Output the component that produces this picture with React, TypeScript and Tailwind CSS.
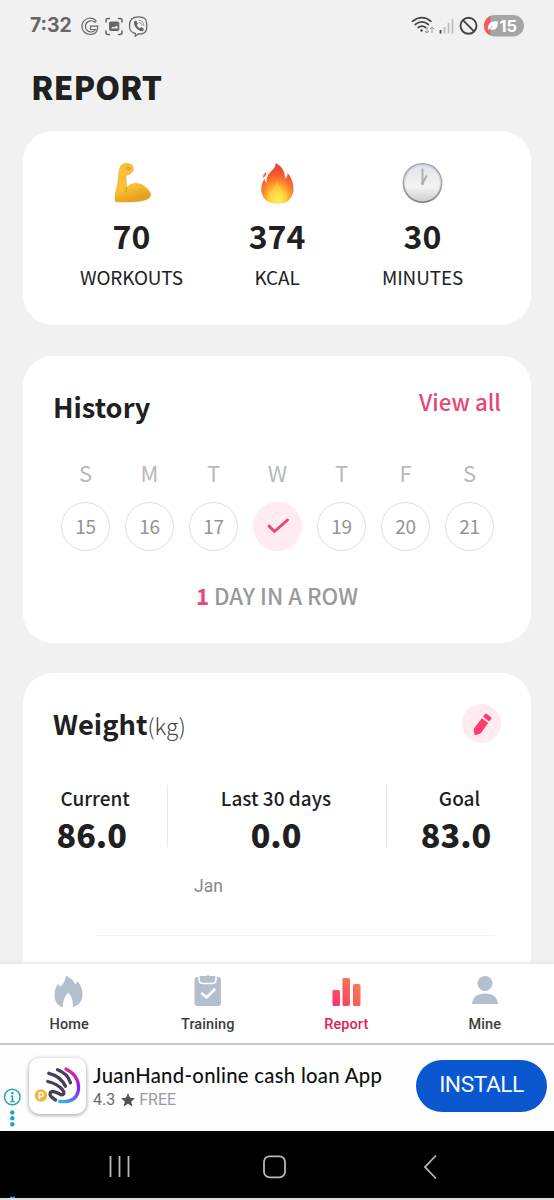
import type { ReactNode } from 'react';

function StatusBar() {
  return (
    <header className="flex h-[52px] shrink-0 items-center pl-[30px] pr-[30px] text-[#666]">
      <span className="w-[51px] font-[Inter,sans-serif] text-[19.400px] font-bold leading-none">7:32</span>
      <svg width="68" height="22" viewBox="81 15 68 22" fill="none" stroke="#666" className="shrink-0">
        <path d="M96.300 20.800l-1.500 1.500a5.600 5.600 0 1 0 .8 7.200H90.500v-3.300h7.200q.3 8-7.200 8.300a8.200 8.200 0 1 1 5.800-13.700" strokeWidth="1.200" />
        <path d="M106 22v-1.500q0-2 2-2h1.500M118.500 18.500h1.500q2 0 2 2V22M122 31v1.500q0 2-2 2h-1.500M109.500 34.500H108q-2 0-2-2V31" strokeWidth="1.500" strokeLinecap="round" />
        <rect x="109.500" y="22" width="9.300" height="8.500" rx="1" fill="#666" />
        <path d="M111 28.500l2-2 1.500 1 2-2 1.200 1.500v1.500z" fill="#eee" stroke="none" />
        <path d="M138.500 16.800c6 0 8.300 2 8.300 8.700s-2 8.500-8.500 8.500l-3 2.200V33.500c-4-.8-5.800-2.500-5.800-8s2.500-8.700 9-8.700z" strokeWidth="1.300" />
        <path d="M134 21.500l2-1 2 3-1.200 1.500q1 2.200 3 3.200l1.500-1.200 2.700 2-1 2q-2 1-6-2-3.500-3.500-3-7.500z" fill="#666" stroke="none" />
        <path d="M138.500 20.200q5 .3 5.500 5.800M139 22.300q3 .5 3.200 3.500" strokeWidth="1" stroke="#999" />
      </svg>
      <svg width="114" height="24" viewBox="410 14 114 24" fill="none" className="ml-auto shrink-0" stroke="#444">
        <g strokeWidth="1.700" strokeLinecap="round">
          <path d="M412.500 21.300q9.500-7.300 18.500 0" />
          <path d="M415.200 24.500q6.800-5.200 13.200 0" />
          <path d="M418.200 27.500q3.800-2.900 7.500 0" />
        </g>
        <circle cx="421.500" cy="30.500" r="1.200" fill="#444" stroke="none" />
        <path d="M427 27v6m-2-2 2 2 2-2M432 33v-6m-2 2 2-2 2 2" stroke="#999" />
        <path d="M440.500 30v3.500" strokeWidth="1.800" />
        <path d="M444.500 27v6.500M448.500 23v10.500M452.500 19v14.500" stroke="#bbb" strokeWidth="1.700" />
        <circle cx="468.500" cy="25.800" r="8" strokeWidth="1.900" />
        <path d="M463 20.200l11 11.200" strokeWidth="1.900" />
        <clipPath id="battery"><rect x="484" y="15" width="40" height="21.500" rx="10.700" /></clipPath>
        <g clipPath="url(#battery)" stroke="none">
          <path fill="#a5a5a5" d="M484 15h40v22h-40z" />
          <path fill="#f45b57" d="M484 15h6.300v22H484z" />
        </g>
        <path d="M488 30.500q-.8-6.500 3.500-8.500 3-1 6.500-.5-.3 6-2.500 7.500-2.500 1.700-6 0z" fill="#fff" stroke="none" />
        <path d="M488 30l5-4" stroke="#a5a5a5" strokeWidth=".8" />
        <text x="499.500" y="31.500" fill="#fff" stroke="none" fontFamily="Inter, sans-serif" fontSize="16.500" fontWeight="700" textLength="17.500" lengthAdjust="spacingAndGlyphs">15</text>
      </svg>
    </header>
  );
}

function Arm() {
  return (
    <svg width="42" height="42" viewBox="111 162 42 42">
      <defs>
        <linearGradient id="arm" x1="0" y1="0" x2=".3" y2="1">
          <stop stopColor="#f9be38" /><stop offset=".65" stopColor="#fcc236" /><stop offset="1" stopColor="#e5a021" />
        </linearGradient>
      </defs>
      <path fill="url(#arm)" stroke="#e8ab2b" strokeWidth=".6" d="M120.500 166.500c1-2.200 4-3.500 7.500-3 3.800.3 6 3.200 5 6.700-.8 3-3 4-5.500 4.700-1.500.5-1.700 1.700-1.500 3.500l.8 9c5-5.500 13.500-5 19 0 3.200 2.700 5.500 6 4.800 8.500-1.300 4.500-13 6-20 6-7.500 0-13 .5-15.500-.7-.8-5 1.500-12.500 2.700-18.500 1-5 .5-10.700 2.700-16.200z" />
      <path d="M126.500 187.500q-.8 2-.5 4" fill="none" stroke="#d59420" strokeWidth="1" strokeLinecap="round" />
      <path d="M126 168.500q2-2.500 4.500-.5 0 2.500-3 1.800" fill="none" stroke="#cd8a17" strokeWidth=".9" strokeLinecap="round" />
    </svg>
  );
}

function Flame() {
  return (
    <svg width="42" height="42" viewBox="256 162 42 42">
      <defs>
        <radialGradient id="flame" cx=".5" cy=".93" r=".8">
          <stop stopColor="#fff78a" /><stop offset=".25" stopColor="#ffdc45" /><stop offset=".5" stopColor="#ffa02d" /><stop offset=".75" stopColor="#f9642f" /><stop offset="1" stopColor="#ea4935" />
        </radialGradient>
      </defs>
      <path fill="url(#flame)" d="M275.500 163c6.500 3.200 9.800 9 9.500 15.700 2-1.200 2.700-3.500 2.500-5.700 4 4 6.200 10.500 6 16.500-.2 5-2.500 9-6 12-2.500 1.500-6 2-9.500 2-5 0-9.500-.7-12.300-3.500-3.500-3.500-5-8-4.300-13 .4-3.300 1.800-6 3-8.500.5 2.200 1 3.500 2.200 4.500-.6-4.500.6-7.500 3.400-10.500 3-3 6-5.500 5.500-9.500z" />
      <path fill="#f15a33" d="M266 172c.8 2.700-1 4.200-2.700 6.200-.7-2.700.7-4.500 2.700-6.200z" />
      <path fill="#ffd93b" opacity=".45" d="M277 181c-1 6-5 7-5.500 12-1.500-1-2-2-2-3.500-3 4-3 9 1 12.500 4 2.500 10 2.500 14 0 3-3 3.500-7 2-11-1 2-2 3-3.500 3.500 0-5-4-7-6-13.500z" />
    </svg>
  );
}

function Clock() {
  return (
    <svg width="42" height="42" viewBox="402 162 42 42">
      <defs>
        <linearGradient id="rim" x2="0" y2="1"><stop stopColor="#929baa" /><stop offset=".5" stopColor="#aaa" /><stop offset="1" stopColor="#88888b" /></linearGradient>
        <linearGradient id="face" x2="0" y2="1"><stop stopColor="#e3e5e8" /><stop offset=".6" stopColor="#f3f3f3" /><stop offset="1" stopColor="#cfcfcf" /></linearGradient>
      </defs>
      <circle cx="422.500" cy="183" r="20" fill="url(#rim)" />
      <circle cx="422.500" cy="182.700" r="18.500" fill="#d3d9e3" />
      <circle cx="422.500" cy="183.500" r="17.300" fill="url(#face)" />
      <path d="M422.500 168.500v15.300M422.500 183.500l4.300-8" stroke="#adadad" strokeWidth="1.900" fill="none" />
      <circle cx="422.500" cy="183.500" r="1.500" fill="#aaa" />
    </svg>
  );
}

function Stat({ icon, value, label }: { icon: ReactNode; value: string; label: string }) {
  return (
    <div className="flex w-[145.500px] flex-col items-center">
      {icon}
      <b className="mt-[11px] text-[32px] font-bold leading-[40px]">{value}</b>
      <span className="mt-[10px] text-[18.900px] leading-[24px] tracking-[-0.1px]">{label}</span>
    </div>
  );
}

const days = [['S', '15'], ['M', '16'], ['T', '17'], ['W', ''], ['T', '19'], ['F', '20'], ['S', '21']];

function History() {
  return (
    <section className="mt-[31px] h-[287px] shrink-0 rounded-[30px] bg-white px-[30px] pt-[29px]">
      <div className="flex h-10 items-start justify-between">
        <h2 className="pt-[1px] text-[27.200px] font-bold leading-[40px]">History</h2>
        <span className="text-[22.300px] font-medium leading-[32px] text-[#e74775]">View all</span>
      </div>
      <div className="mt-[33px] flex justify-between pl-[8px] pr-[7px]">
        {days.map(([d, n], i) => (
          <div key={i} className="flex w-[49px] flex-col items-center">
            <span className="h-[28px] text-[22px] leading-[28px] text-[#b7b9bd]">{d}</span>
            <span className={n ? 'mt-[16px] grid size-[49px] place-items-center rounded-full border-[1.500px] border-[#dedede] pb-[2px] text-[19px] leading-none tracking-[-0.3px] text-[#949494]' : 'mt-[16px] grid size-[49px] place-items-center rounded-full bg-[#ffebf0] pb-[1px]'}>
              {n || <svg width="24" height="18" viewBox="0 0 24 18" fill="none" stroke="#e74775" strokeWidth="3" strokeLinecap="round" strokeLinejoin="round"><path d="M3 9l5.500 5.500L21.500 3" /></svg>}
            </span>
          </div>
        ))}
      </div>
      <p className="mt-[28px] text-center text-[22.200px] font-medium leading-[32px] text-[#999]"><b className="text-[#e74775]">1</b> DAY IN A ROW</p>
    </section>
  );
}

function Measure({ label, value, className, valueClass }: { label: string; value: string; className: string; valueClass: string }) {
  return (
    <div className={className}>
      <span className="block text-[19px] font-medium leading-[26px]">{label}</span>
      <b className={valueClass}>{value}</b>
    </div>
  );
}

function Weight() {
  return (
    <section className="mt-[30px] h-[320px] shrink-0 rounded-t-[30px] bg-white px-[30px] pt-[31px]">
      <div className="flex h-[39px] items-center justify-between">
        <h2 className="text-[27.300px] font-bold leading-[40px]">Weight<span className="text-[22.500px] font-light text-[#444]">(kg)</span></h2>
        <svg width="39" height="39" viewBox="0 0 39 39"><circle cx="19.500" cy="19.500" r="19.500" fill="#ffebf0" /><path fill="#fb3d70" d="M19.800 14.300l6.400 4.600-7 9.800q-.5.700-1.400 1l-3.800 1.200q-1.600.2-1.700-1.300l-.5-3.800q0-1 .6-1.700zM21 12.700l1.800-2.500q.8-1 2-.3l4 3q1.100.9.300 2.100L27.300 17.400z" /></svg>
      </div>
      <div className="mt-[42px] flex h-[62px]">
        <Measure label="Current" value="86.0" className="w-[114px] pl-[7.500px]" valueClass="-ml-[4px] mt-[3px] block text-[32.300px] font-black leading-[40px]" />
        <Measure label="Last 30 days" value="0.0" className="w-[220px] border-x border-[#e7e7e7] pr-[2px] text-center" valueClass="mt-[3px] block text-[32.300px] font-black leading-[40px]" />
        <Measure label="Goal" value="83.0" className="w-[114px] pl-[31px] text-center" valueClass="-ml-[7px] mt-[3px] block text-[32.300px] font-black leading-[40px]" />
      </div>
      <div className="ml-[43px] mr-[7px] mt-[25px] h-[64px] border-b border-[#f2f2f2] pl-[98px] font-[Roboto,sans-serif] text-[17.500px] leading-[28px] text-[#888]">Jan</div>
    </section>
  );
}

function Tab({ label, icon, active }: { label: string; icon: ReactNode; active?: boolean }) {
  return (
    <div className="flex w-[138.500px] flex-col items-center pt-[9px]">
      {icon}
      <span className={active ? 'mt-[6px] text-[14.500px] font-medium leading-[20px] tracking-[0.100px] text-[#df2350]' : 'mt-[6px] text-[14.500px] font-medium leading-[20px] tracking-[0.100px] text-[#3c3c3c]'}>{label}</span>
    </div>
  );
}

function Tabs() {
  return (
    <nav className="flex h-[79px] shrink-0 bg-white font-[Roboto,sans-serif] shadow-[0_-2px_3px_#e8e8e8]">
      <Tab label="Home" icon={<svg width="36" height="36" viewBox="51 973 36 36"><path fill="#b3bfce" d="M66 975.500q7 3.500 9.300 9 1.700-1 1.900-3.500 5.300 5.300 5.300 14 0 9-9.700 12.200 1-8.500-4.600-14.700-6 6.500-5.200 14.700Q54.500 1005 54.500 995.500q0-7 3.300-11.500l2.700 2.500q4.500-3.500 5.500-11z" /></svg>} />
      <Tab label="Training" icon={<svg width="36" height="36" viewBox="190 973 36 36"><rect x="194.500" y="977" width="26.500" height="29" rx="3" fill="#b3bfce" /><path d="M199 976v3.500q0 4 4 4h9q4 0 4-4V976" fill="#b3bfce" stroke="#fff" strokeWidth="1.500" /><path fill="#b3bfce" d="M200.500 977h4q3.500-3.500 7 0h3v2q0 3-3 3h-8q-3 0-3-3z" /><path d="M202 993.500l4.500 4 8-8" stroke="#fff" strokeWidth="2.500" strokeLinecap="round" strokeLinejoin="round" fill="none" /></svg>} />
      <Tab active label="Report" icon={<svg width="36" height="36" viewBox="329 973 36 36"><defs><linearGradient id="bars" gradientUnits="userSpaceOnUse" x1="333" y1="1003" x2="357" y2="982"><stop stopColor="#fb2f79" /><stop offset=".4" stopColor="#f9505f" /><stop offset="1" stopColor="#ff7951" /></linearGradient></defs><g fill="url(#bars)"><rect x="333.500" y="990" width="7.500" height="16" rx="1.500" /><rect x="343.500" y="978" width="7.500" height="28" rx="1.500" /><rect x="354" y="984" width="7.500" height="22" rx="1.500" /></g></svg>} />
      <Tab label="Mine" icon={<svg width="36" height="36" viewBox="467 973 36 36" fill="#b3bfce"><circle cx="485" cy="983.500" r="7.500" /><path d="M472 1004q1-10.500 13-10.500t13 10.500z" /></svg>} />
    </nav>
  );
}

function JuanHandLogo() {
  return (
    <svg width="66" height="66" viewBox="24 1052 66 66" fill="none" className="ml-[3px] shrink-0">
      <defs><linearGradient id="hand" gradientUnits="userSpaceOnUse" x1="72" y1="1067" x2="60" y2="1103"><stop stopColor="#ed3278" /><stop offset=".4" stopColor="#9817e8" /><stop offset=".72" stopColor="#7055ee" /><stop offset="1" stopColor="#20c5ed" /></linearGradient></defs>
      <rect x="29" y="1058" width="57" height="56" rx="10" fill="#fff" className="drop-shadow-[0_1px_2px_#999]" />
      <g stroke="#45405a" strokeWidth="3.300" strokeLinecap="round">
        <path d="M57.500 1069.800c6.500 2.200 11 7 13 13" />
        <path d="M48.800 1073.300c8 2 14 7 16.700 13" />
        <path d="M47.800 1081.500c6.500 1.700 11 4 14.500 8 3.500 4.200.5 6.500-3 4.300-4-2.300-8-3.500-9.200-.5-.8 2.500 2.500 5 5.500 6.700" />
      </g>
      <path d="M66 1069c8 4 13 11 12.500 20-1 10-8 13.500-19 12.500" stroke="url(#hand)" strokeWidth="3.300" strokeLinecap="round" />
      <circle cx="41" cy="1095.500" r="6.200" fill="#efb842" />
      <text x="38.200" y="1099" fill="#fff" fontFamily="Roboto" fontSize="9" fontWeight="700">P</text>
    </svg>
  );
}

function Ad() {
  return (
    <aside className="flex h-[88px] shrink-0 border-t-2 border-[#c8c8c8] bg-[#fefefe]">
      <svg width="21" height="86" viewBox="0 1045 21 86" fill="none" className="shrink-0"><circle cx="12.300" cy="1097" r="7.800" stroke="#22a4ba" strokeWidth="1.500" /><g fill="#22a4ba"><circle cx="12.300" cy="1093" r="1.300" /><path d="M10.500 1095.500h2.800v5.500h1.500v1.300h-4.500v-1.300h1.300v-4.200h-1.100z" /><circle cx="12.300" cy="1112.500" r="2.200" /><circle cx="12.300" cy="1118.300" r="2.200" /><circle cx="12.300" cy="1124.200" r="2.200" /></g></svg>
      <div className="pt-[7px]"><JuanHandLogo /></div>
      <div className="ml-[3px] pt-[16px]">
        <div className="whitespace-nowrap font-[Lato,sans-serif] text-[20.300px] font-medium leading-[28px] tracking-[0.300px] text-[#111]">JuanHand-online cash loan App</div>
        <div className="flex items-center font-[Roboto,sans-serif] text-[16px] leading-[21px] text-[#6b6b6b]">4.3
          <svg width="14" height="14" viewBox="0 0 24 24" className="ml-[6px] mr-[4px]"><path fill="#555" d="M12 0l3.500 8 8.500.8-6.500 5.700 2 8.500-7.500-4.500L4.500 23l2-8.500L0 8.800 8.500 8z" /></svg>
          <span className="text-[#969ba0]">FREE</span>
        </div>
      </div>
      <button className="ml-auto mr-[7px] mt-[15px] h-[52px] w-[131px] rounded-full bg-[#0b57d0] pb-[1px] font-[Roboto,sans-serif] text-[22.800px] leading-none tracking-[-0.500px] text-[#f2f8ff]">INSTALL</button>
    </aside>
  );
}

export default function App() {
  return (
    <div className="flex h-[1200px] w-[554px] flex-col overflow-hidden bg-[#f1f1f1]">
      <StatusBar />
      <main className={'flex h-[912px] shrink-0 flex-col overflow-hidden pl-[23px] pr-[23px] text-[#202020] font-["Noto_Sans_CJK_SC",sans-serif]'}>
        <h1 className="ml-[8px] mt-[13px] h-[66px] shrink-0 text-[31.700px] font-black leading-[42px]">REPORT</h1>
        <section className="flex h-[194px] shrink-0 justify-center rounded-[30px] bg-white pt-[31px]">
          <Stat icon={<Arm />} value="70" label="WORKOUTS" />
          <Stat icon={<Flame />} value="374" label="KCAL" />
          <Stat icon={<Clock />} value="30" label="MINUTES" />
        </section>
        <History />
        <Weight />
      </main>
      <Tabs />
      <Ad />
      <footer className="h-[67px] shrink-0 bg-black">
        <svg width="554" height="67" viewBox="0 1131 554 67" fill="none" stroke="#b9b9b9" strokeWidth="1.800"><path d="M110.500 1156v21M119.500 1156v21M128.500 1156v21" /><rect x="264" y="1156.300" width="21" height="21" rx="5.500" /><path d="M436 1155.500l-11 11.500 11 11.500" /><path d="M10 1197.500h5" stroke="#22a4ba" /></svg>
      </footer>
      <div className="h-[2px] bg-[#ddd]" />
    </div>
  );
}
